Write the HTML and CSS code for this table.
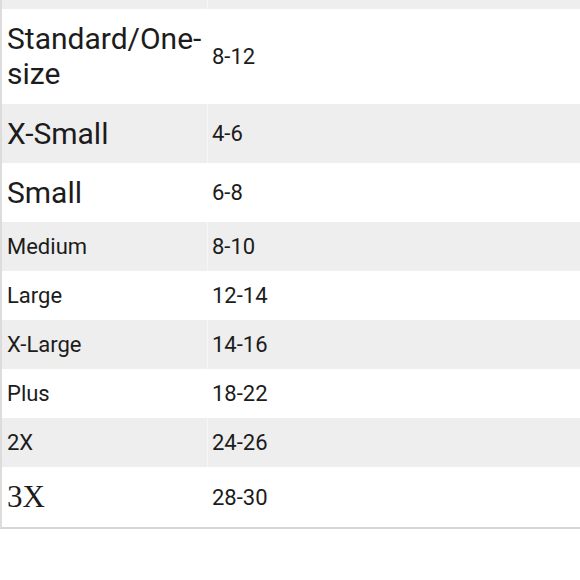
FILE: index.html
```html
<!DOCTYPE html>
<html lang="en">
<head>
<meta charset="utf-8">
<title>Size chart</title>
<link rel="stylesheet" href="styles.css">
</head>
<body>
<table class="size-table">
  <colgroup>
    <col class="col-size">
    <col class="col-us">
  </colgroup>
  <tbody>
    <tr class="row alt edge"><td class="cell-edge"></td><td class="cell-edge value-edge"></td></tr>
    <tr class="row"><td class="cell name big wrap">Standard/One-size</td><td class="cell value">8-12</td></tr>
    <tr class="row alt"><td class="cell name big">X-Small</td><td class="cell value">4-6</td></tr>
    <tr class="row"><td class="cell name big">Small</td><td class="cell value">6-8</td></tr>
    <tr class="row alt"><td class="cell name">Medium</td><td class="cell value">8-10</td></tr>
    <tr class="row"><td class="cell name">Large</td><td class="cell value">12-14</td></tr>
    <tr class="row alt"><td class="cell name">X-Large</td><td class="cell value">14-16</td></tr>
    <tr class="row"><td class="cell name">Plus</td><td class="cell value">18-22</td></tr>
    <tr class="row alt"><td class="cell name">2X</td><td class="cell value">24-26</td></tr>
    <tr class="row"><td class="cell name serif">3X</td><td class="cell value">28-30</td></tr>
  </tbody>
</table>
</body>
</html>
```
FILE: styles.css
```css
html, body {
  margin: 0;
  padding: 0;
  background: #ffffff;
  overflow: hidden;
}

body {
  font-family: Roboto, "Noto Sans", sans-serif;
  color: #1c1c1c;
}

.size-table {
  width: 620px;
  table-layout: fixed;
  border-collapse: separate;
  border-spacing: 0;
  border-left: 2px solid #dcdcdc;
  border-bottom: 2px solid #d6d6d6;
}

.col-size {
  width: 205px;
}

.row {
  background: #ffffff;
}

.row.alt {
  background: #eeeeee;
}

.cell-edge {
  height: 9px;
  padding: 0;
}

.value-edge {
  border-left: 1px solid rgba(255, 255, 255, 0.45);
}

.cell {
  padding: 12px 5px;
  vertical-align: middle;
  font-size: 22px;
  line-height: 25px;
  text-align: left;
}

.value {
  border-left: 1px solid rgba(255, 255, 255, 0.45);
  padding-left: 4px;
}

.name.big {
  font-size: 30px;
  line-height: 35px;
}

.name.wrap {
  padding-bottom: 13px;
}

.name.serif {
  font-family: "Liberation Serif", "Times New Roman", serif;
  font-size: 31px;
  line-height: 36px;
}
```
